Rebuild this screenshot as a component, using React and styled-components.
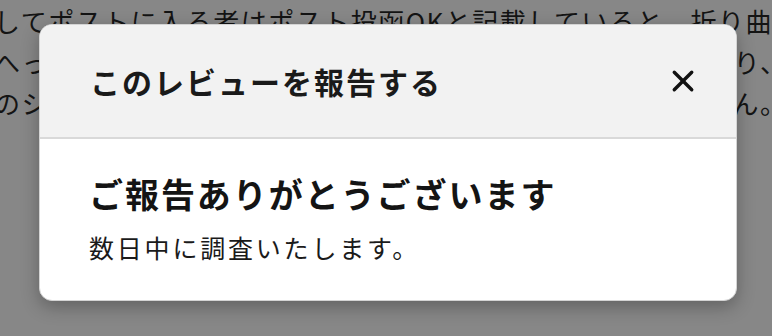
import React from "react";
import styled, { createGlobalStyle } from "styled-components";

const Global = createGlobalStyle`
  html, body { margin: 0; padding: 0; }
  body {
    width: 772px;
    height: 336px;
    overflow: hidden;
    background: #878787;
    font-family: "Noto Sans CJK JP", "Noto Sans", sans-serif;
  }
`;

const Page = styled.div`
  position: relative;
  width: 772px;
  height: 336px;
  overflow: hidden;
  background: #878787;
`;

const Article = styled.div`
  display: flex;
  flex-direction: column;
  margin-left: -6px;
  color: #141414;
  font-size: 26px;
  letter-spacing: 1.5px;
  line-height: 41px;
  white-space: nowrap;
`;

const Line = styled.div``;

const Dialog = styled.div`
  position: absolute;
  left: 39px;
  top: 24px;
  width: 698px;
  height: 277px;
  box-sizing: border-box;
  border: 1px solid #d4d4d4;
  border-radius: 13px;
  overflow: hidden;
  background: #ffffff;
  box-shadow: 0 6px 18px rgba(0, 0, 0, 0.28);
  display: flex;
  flex-direction: column;
`;

const Header = styled.div`
  height: 112px;
  flex: none;
  background: #f2f2f2;
  border-bottom: 2px solid #d9d9d9;
  display: flex;
  align-items: center;
  justify-content: space-between;
  padding: 0 38px 0 50px;
`;

const Title = styled.h2`
  margin: 0;
  font-size: 30px;
  font-weight: 700;
  letter-spacing: 2px;
  line-height: 38px;
  color: #1a1a1a;
`;

const CloseButton = styled.button`
  width: 30px;
  height: 30px;
  padding: 0;
  border: none;
  background: transparent;
  display: flex;
  align-items: center;
  justify-content: center;
  color: #111;
  cursor: pointer;
`;

const Body = styled.div`
  padding: 34px 50px 0 49px;
  display: flex;
  flex-direction: column;
  gap: 16px;
`;

const Heading = styled.h3`
  margin: 0;
  font-size: 34px;
  font-weight: 700;
  letter-spacing: 1.95px;
  line-height: 42px;
  color: #141414;
`;

const Text = styled.p`
  margin: 0;
  font-size: 25px;
  font-weight: 400;
  letter-spacing: 2.8px;
  line-height: 32px;
  color: #1a1a1a;
`;

const XIcon = () => (
  <svg width="30" height="30" viewBox="0 0 24 24" fill="none" stroke="currentColor" strokeWidth="2.7" strokeLinecap="round">
    <path d="M5 5 L19 19" />
    <path d="M19 5 L5 19" />
  </svg>
);

export default function App() {
  return (
    <Page>
      <Global />
      <Article>
        <Line>してポストに入る者はポスト投函OKと記載していると、折り曲げ</Line>
        <Line>へっこまないように厚紙で補強して封筒に入れてくださったり、</Line>
        <Line>のシールを貼ってくださる方もいますが、確実ではありません。</Line>
      </Article>
      <Dialog role="dialog">
        <Header>
          <Title>このレビューを報告する</Title>
          <CloseButton aria-label="閉じる">
            <XIcon />
          </CloseButton>
        </Header>
        <Body>
          <Heading>ご報告ありがとうございます</Heading>
          <Text>数日中に調査いたします。</Text>
        </Body>
      </Dialog>
    </Page>
  );
}
